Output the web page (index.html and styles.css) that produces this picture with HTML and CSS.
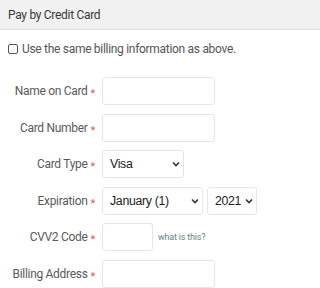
FILE: index.html
```html
<!DOCTYPE html>
<html>
<head>
<meta charset="utf-8">
<link rel="stylesheet" href="styles.css">
</head>
<body>
<div class="panel">
  <div class="panel-head">Pay by Credit Card</div>
  <label class="same">
    <span class="box"></span>
    <span>Use the same billing information as above.</span>
  </label>
  <div class="form">
    <div class="label">Name on Card<span class="req">*</span></div>
    <div class="field"><span class="input w-name"></span></div>

    <div class="label">Card Number<span class="req">*</span></div>
    <div class="field"><span class="input w-name"></span></div>

    <div class="label">Card Type<span class="req">*</span></div>
    <div class="field"><span class="select w-type">Visa</span></div>

    <div class="label">Expiration<span class="req">*</span></div>
    <div class="field"><span class="select w-month">January (1)</span><span class="select w-year">2021</span></div>

    <div class="label">CVV2 Code<span class="req">*</span></div>
    <div class="field"><span class="input w-cvv"></span><a class="help">what is this?</a></div>

    <div class="label">Billing Address<span class="req">*</span></div>
    <div class="field"><span class="input w-name"></span></div>
  </div>
</div>
</body>
</html>
```
FILE: styles.css
```css
html, body {
  margin: 0;
  padding: 0;
  background: #fff;
}
body {
  font-family: Roboto, "Liberation Sans", sans-serif;
  color: #555;
  font-size: 12px;
  letter-spacing: -0.3px;
}
.panel-head {
  height: 30px;
  box-sizing: border-box;
  background: #f1f1f1;
  border-bottom: 1px solid #dedede;
  padding-left: 8px;
  display: flex;
  align-items: center;
  font-size: 12px;
  color: #3a3a3a;
}
.same {
  display: flex;
  align-items: center;
  gap: 4px;
  padding: 10px 8px 0 8px;
  height: 17px;
  font-size: 12px;
  color: #555;
}
.box {
  width: 8px;
  height: 8px;
  border: 1px solid #555;
  border-radius: 2px;
  background: #fff;
}
.form {
  display: grid;
  grid-template-columns: 95px auto;
  column-gap: 7px;
  row-gap: 8.6px;
  padding-top: 20px;
}
.label {
  height: 28px;
  display: flex;
  align-items: center;
  justify-content: flex-end;
  font-size: 12px;
  color: #5a5a5a;
}
.req {
  color: #e05a5a;
  font-size: 11px;
  line-height: 1;
  padding-top: 5px;
  margin-left: 3px;
}
.field {
  display: flex;
  align-items: center;
  gap: 4px;
}
.input, .select {
  box-sizing: border-box;
  height: 28px;
  border: 1px solid #e6e6e6;
  border-radius: 3px;
  background: #fff;
}
.select {
  display: flex;
  align-items: center;
  padding-left: 7px;
  font-family: "Liberation Sans", Arial, sans-serif;
  font-size: 12.3px;
  letter-spacing: -0.3px;
  color: #222;
  background-image: url("data:image/svg+xml,%3Csvg xmlns='http://www.w3.org/2000/svg' width='8' height='6' viewBox='0 0 8 6'%3E%3Cpolyline points='1,1.5 4,4.5 7,1.5' fill='none' stroke='%23333' stroke-width='1.6'/%3E%3C/svg%3E");
  background-repeat: no-repeat;
  background-position: right 3px center;
}
.w-name { width: 113px; }
.w-type { width: 82px; }
.w-month { width: 101px; }
.w-year { width: 50px; }
.w-cvv { width: 51px; }
.help {
  font-size: 9px;
  letter-spacing: -0.2px;
  color: #6b8585;
  margin-left: 1px;
}
```
